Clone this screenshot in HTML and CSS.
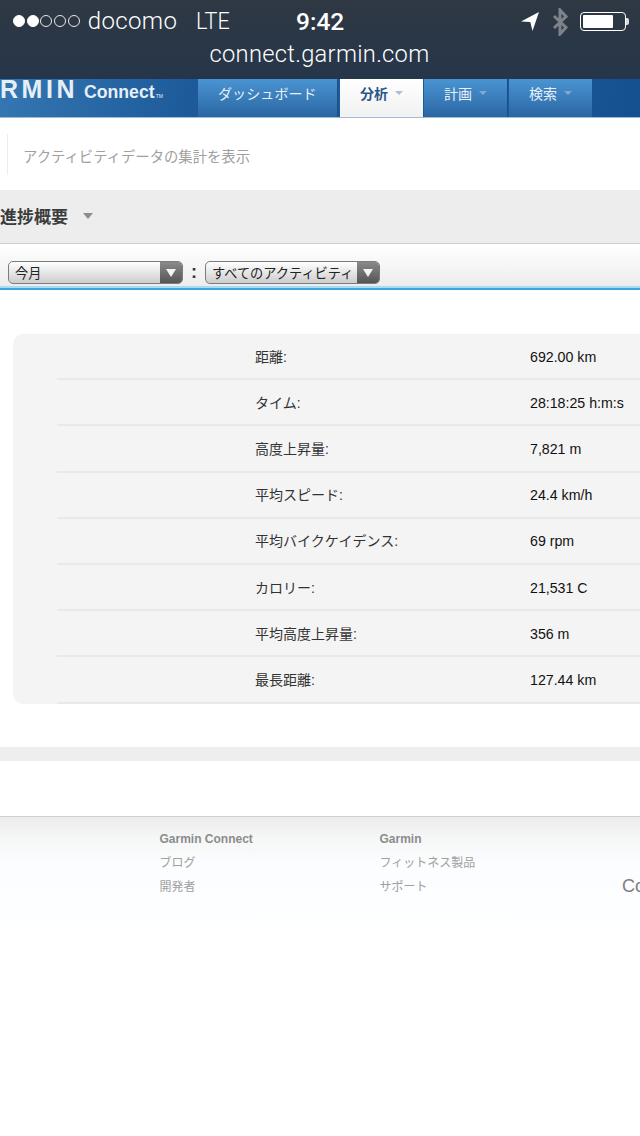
FILE: index.html
```html
<!DOCTYPE html>
<html lang="ja">
<head>
<meta charset="utf-8">
<title>Garmin Connect</title>
<link rel="stylesheet" href="styles.css">
</head>
<body>
<header class="chrome">
  <div class="status">
    <div class="status-left">
      <span class="signal"><i class="dot on"></i><i class="dot on"></i><i class="dot"></i><i class="dot"></i><i class="dot"></i></span>
      <span class="carrier">docomo</span>
      <span class="network">LTE</span>
    </div>
    <div class="clock">9:42</div>
    <div class="status-right">
      <svg class="ico-loc" width="18" height="19" viewBox="0 0 18 19"><path d="M18 0 L0 9.500 L9.300 10 L11.500 19 Z" fill="#fff"/></svg>
      <svg class="ico-bt" width="16" height="28" viewBox="0 0 16 28"><path d="M2 8 L14 19.500 L8 26 L8 2 L14 8.500 L2 20" fill="none" stroke="#7d8389" stroke-width="3"/></svg>
      <div class="battery"><div class="battery-fill"></div></div>
      <div class="battery-tip"></div>
    </div>
  </div>
  <div class="url">connect.garmin.com</div>
</header>

<nav class="nav">
  <div class="logo"><span class="logo-mark">ARMIN</span><span class="logo-sub">Connect</span><span class="logo-tm">TM</span></div>
  <div class="tabs">
    <a class="tab tab-dash">ダッシュボード</a>
    <a class="tab tab-active">分析<i class="caret"></i></a>
    <a class="tab tab-plan">計画<i class="caret"></i></a>
    <a class="tab tab-search">検索<i class="caret"></i></a>
  </div>
</nav>

<section class="intro"><p class="intro-text">アクティビティデータの集計を表示</p></section>

<section class="section-head">
  <h1 class="section-title">進捗概要</h1><i class="section-caret"></i>
</section>

<section class="filters">
  <div class="select select-a"><span class="select-label">今月</span><span class="select-btn"><i class="select-arrow"></i></span></div>
  <span class="colon">:</span>
  <div class="select select-b"><span class="select-label">すべてのアクティビティ</span><span class="select-btn"><i class="select-arrow"></i></span></div>
</section>

<main class="card">
  <div class="row"><span class="label">距離:</span><span class="value">692.00 km</span></div>
  <div class="row"><span class="label">タイム:</span><span class="value">28:18:25 h:m:s</span></div>
  <div class="row"><span class="label">高度上昇量:</span><span class="value">7,821 m</span></div>
  <div class="row"><span class="label">平均スピード:</span><span class="value">24.4 km/h</span></div>
  <div class="row"><span class="label">平均バイクケイデンス:</span><span class="value">69 rpm</span></div>
  <div class="row"><span class="label">カロリー:</span><span class="value">21,531 C</span></div>
  <div class="row"><span class="label">平均高度上昇量:</span><span class="value">356 m</span></div>
  <div class="row"><span class="label">最長距離:</span><span class="value">127.44 km</span></div>
</main>

<div class="band"></div>

<footer class="footer">
  <div class="col col-a">
    <h2 class="col-title">Garmin Connect</h2>
    <a class="col-link">ブログ</a>
    <a class="col-link">開発者</a>
  </div>
  <div class="col col-b">
    <h2 class="col-title">Garmin</h2>
    <a class="col-link">フィットネス製品</a>
    <a class="col-link">サポート</a>
  </div>
  <div class="col col-c">Co</div>
</footer>
</body>
</html>
```
FILE: styles.css
```css
* { box-sizing: border-box; }
html, body { margin: 0; padding: 0; }
body {
  width: 640px;
  height: 1136px;
  overflow: hidden;
  background: #fff;
  font-family: "Liberation Sans", "Noto Sans CJK JP", sans-serif;
  color: #333;
}
i { display: block; font-style: normal; }
h1, h2, p { margin: 0; font-weight: normal; }

/* Browser chrome */
.chrome {
  height: 79px;
  background: linear-gradient(#2f3843, #26364a);
  color: #fff;
  font-family: Roboto, "Liberation Sans", sans-serif;
}
.status {
  height: 40px;
  display: grid;
  grid-template-columns: 283px auto 1fr;
  align-items: center;
  padding: 2px 0 0 13px;
}
.status-left { display: flex; align-items: center; }
.signal { display: flex; gap: 1.700px; margin-right: 8px; }
.dot {
  width: 12px;
  height: 12px;
  border-radius: 50%;
  border: 1px solid #e8e8e8;
}
.dot.on { background: #fff; border-color: #fff; }
.carrier { font-size: 24px; font-weight: 300; letter-spacing: 0.35px; }
.network { font-size: 24px; font-weight: 300; margin-left: 19px; transform: scaleX(0.9); transform-origin: left; }
.clock { font-size: 24.500px; font-weight: 500; }
.status-right {
  display: flex;
  align-items: center;
  justify-content: flex-end;
  padding-right: 11px;
}
.ico-loc { margin-right: 13px; margin-top: 1px; }
.ico-bt { margin-right: 12px; margin-top: 1px; }
.battery {
  width: 46px;
  height: 19px;
  border: 1px solid #fff;
  border-radius: 4px;
  padding: 2px;
}
.battery-fill { width: 30px; height: 100%; background: #fff; border-radius: 1px; }
.battery-tip { width: 3px; height: 7px; background: #ddd; border-radius: 0 2px 2px 0; }
.url {
  height: 39px;
  margin-left: -1px;
  text-align: center;
  font-size: 23.700px;
  line-height: 28px;
  font-weight: 300;
  letter-spacing: 0.3px;
}

/* Site nav */
.nav {
  height: 39px;
  display: flex;
  background: linear-gradient(100deg, #3477b2 0, #1d5a9a 190px, #1d5a9a 500px, #14508f 640px);
  border-bottom: 1px solid #9fbcd6;
  overflow: hidden;
}
.logo {
  width: 198px;
  flex: none;
  display: flex;
  align-items: baseline;
  color: #e6eff6;
  white-space: nowrap;
  padding-top: 1px;
  line-height: 19px;
}
.logo-mark {
  font-size: 25px;
  font-weight: 700;
  letter-spacing: 3.500px;
  margin-left: -21.500px;
}
.logo-sub { font-size: 17.700px; font-weight: 700; margin-left: 6px; }
.logo-tm { font-size: 5px; margin-left: 1px; }
.tabs { display: flex; }
.tab {
  height: 38px;
  padding-bottom: 10px;
  display: flex;
  align-items: center;
  justify-content: center;
  gap: 7px;
  font-size: 14px;
  color: #e8f0f7;
  background: linear-gradient(#4a94d2, #2a66a3);
  border-right: 1px solid #1b4f86;
}
.tab-dash { width: 140px; margin-right: 2px; justify-content: flex-start; padding-left: 20px; letter-spacing: 0.1px; }
.tab-active {
  width: 83px;
  margin-right: 1px;
  background: linear-gradient(#fff, #f1f1f1);
  color: #2a5687;
  font-weight: 700;
  border: 0;
}
.tab-plan { width: 84px; margin-right: 1px; }
.tab-search { width: 83px; border: 0; }
.caret {
  width: 0;
  height: 0;
  border-left: 4px solid transparent;
  border-right: 4px solid transparent;
  border-top: 4px solid #82a9cf;
}
.tab-active .caret { border-top-color: #a9bfd6; }

/* Intro */
.intro { height: 72px; padding: 16px 0 0 7px; }
.intro-text {
  height: 41px;
  border-left: 1px solid #ececec;
  padding-left: 15px;
  font-size: 14.350px;
  line-height: 47px;
  color: #a0a0a0;
}

/* Section head */
.section-head {
  height: 54px;
  display: flex;
  align-items: center;
  background: #ededed;
  border-bottom: 1px solid #cfcfcf;
}
.section-title { font-size: 17px; font-weight: 700; color: #3c3c3c; margin: 0 0 2px 0; }
.section-caret {
  width: 0;
  height: 0;
  margin: 0 0 2px 15px;
  border-left: 5px solid transparent;
  border-right: 5px solid transparent;
  border-top: 6px solid #8d8d8d;
}

/* Filters */
.filters {
  height: 46px;
  display: flex;
  align-items: flex-start;
  padding: 17px 0 0 8px;
  background: linear-gradient(#fff, #ececec);
  border-bottom: 2px solid #3aa6e2;
  box-shadow: 0 -2px 0 #a9dbf5 inset;
}
.select {
  width: 175px;
  height: 23px;
  display: flex;
  border: 1px solid #7c7c7c;
  border-radius: 5px;
  background: linear-gradient(#fff, #cdcdcd);
  overflow: hidden;
}
.select-label { flex: 1; font-size: 13.200px; line-height: 23px; padding-left: 6px; color: #222; white-space: nowrap; }
.select-btn {
  width: 22px;
  flex: none;
  display: flex;
  align-items: center;
  justify-content: center;
  background: linear-gradient(#8a8a8a, #555);
}
.select-arrow {
  width: 0;
  height: 0;
  border-left: 5px solid transparent;
  border-right: 5px solid transparent;
  border-top: 8px solid #f4f4f4;
}
.colon { width: 22px; text-align: center; font-size: 18px; line-height: 22px; color: #333; font-weight: 700; }

/* Stats card */
.card {
  margin: 44px 0 0 13px;
  height: 370px;
  padding-left: 44px;
  background: #f4f4f4;
  border-radius: 10px 0 0 10px;
}
.row {
  height: 46.200px;
  display: flex;
  align-items: center;
  border-bottom: 2px solid #e9e9e9;
  font-size: 14px;
  padding-bottom: 1px;
}
.label { width: 275px; margin-left: 198px; color: #333; }
.value { color: #111; font-size: 14.200px; padding-top: 2px; }

.band { height: 14px; margin-top: 43px; background: #eeeeee; }

/* Footer */
.footer {
  margin-top: 55px;
  height: 114px;
  display: flex;
  border-top: 1px solid #cfcfcf;
  background: linear-gradient(#ececec 0, #f6f7f7 22px, #fbfdfe 48px, #fcfeff 95px, #fff 114px);
  color: #999;
  font-size: 12px;
}
.col { padding-top: 15px; }
.col-a { margin-left: 159.500px; width: 220px; }
.col-b { width: 242.500px; }
.col-title { font-size: 12px; font-weight: 700; color: #8c8c8c; line-height: 14px; margin-bottom: 5px; }
.col-link { display: block; line-height: 24px; color: #a0a0a0; }
.col-c { font-size: 18px; color: #808080; padding-top: 59px; white-space: nowrap; width: 0; }
```
